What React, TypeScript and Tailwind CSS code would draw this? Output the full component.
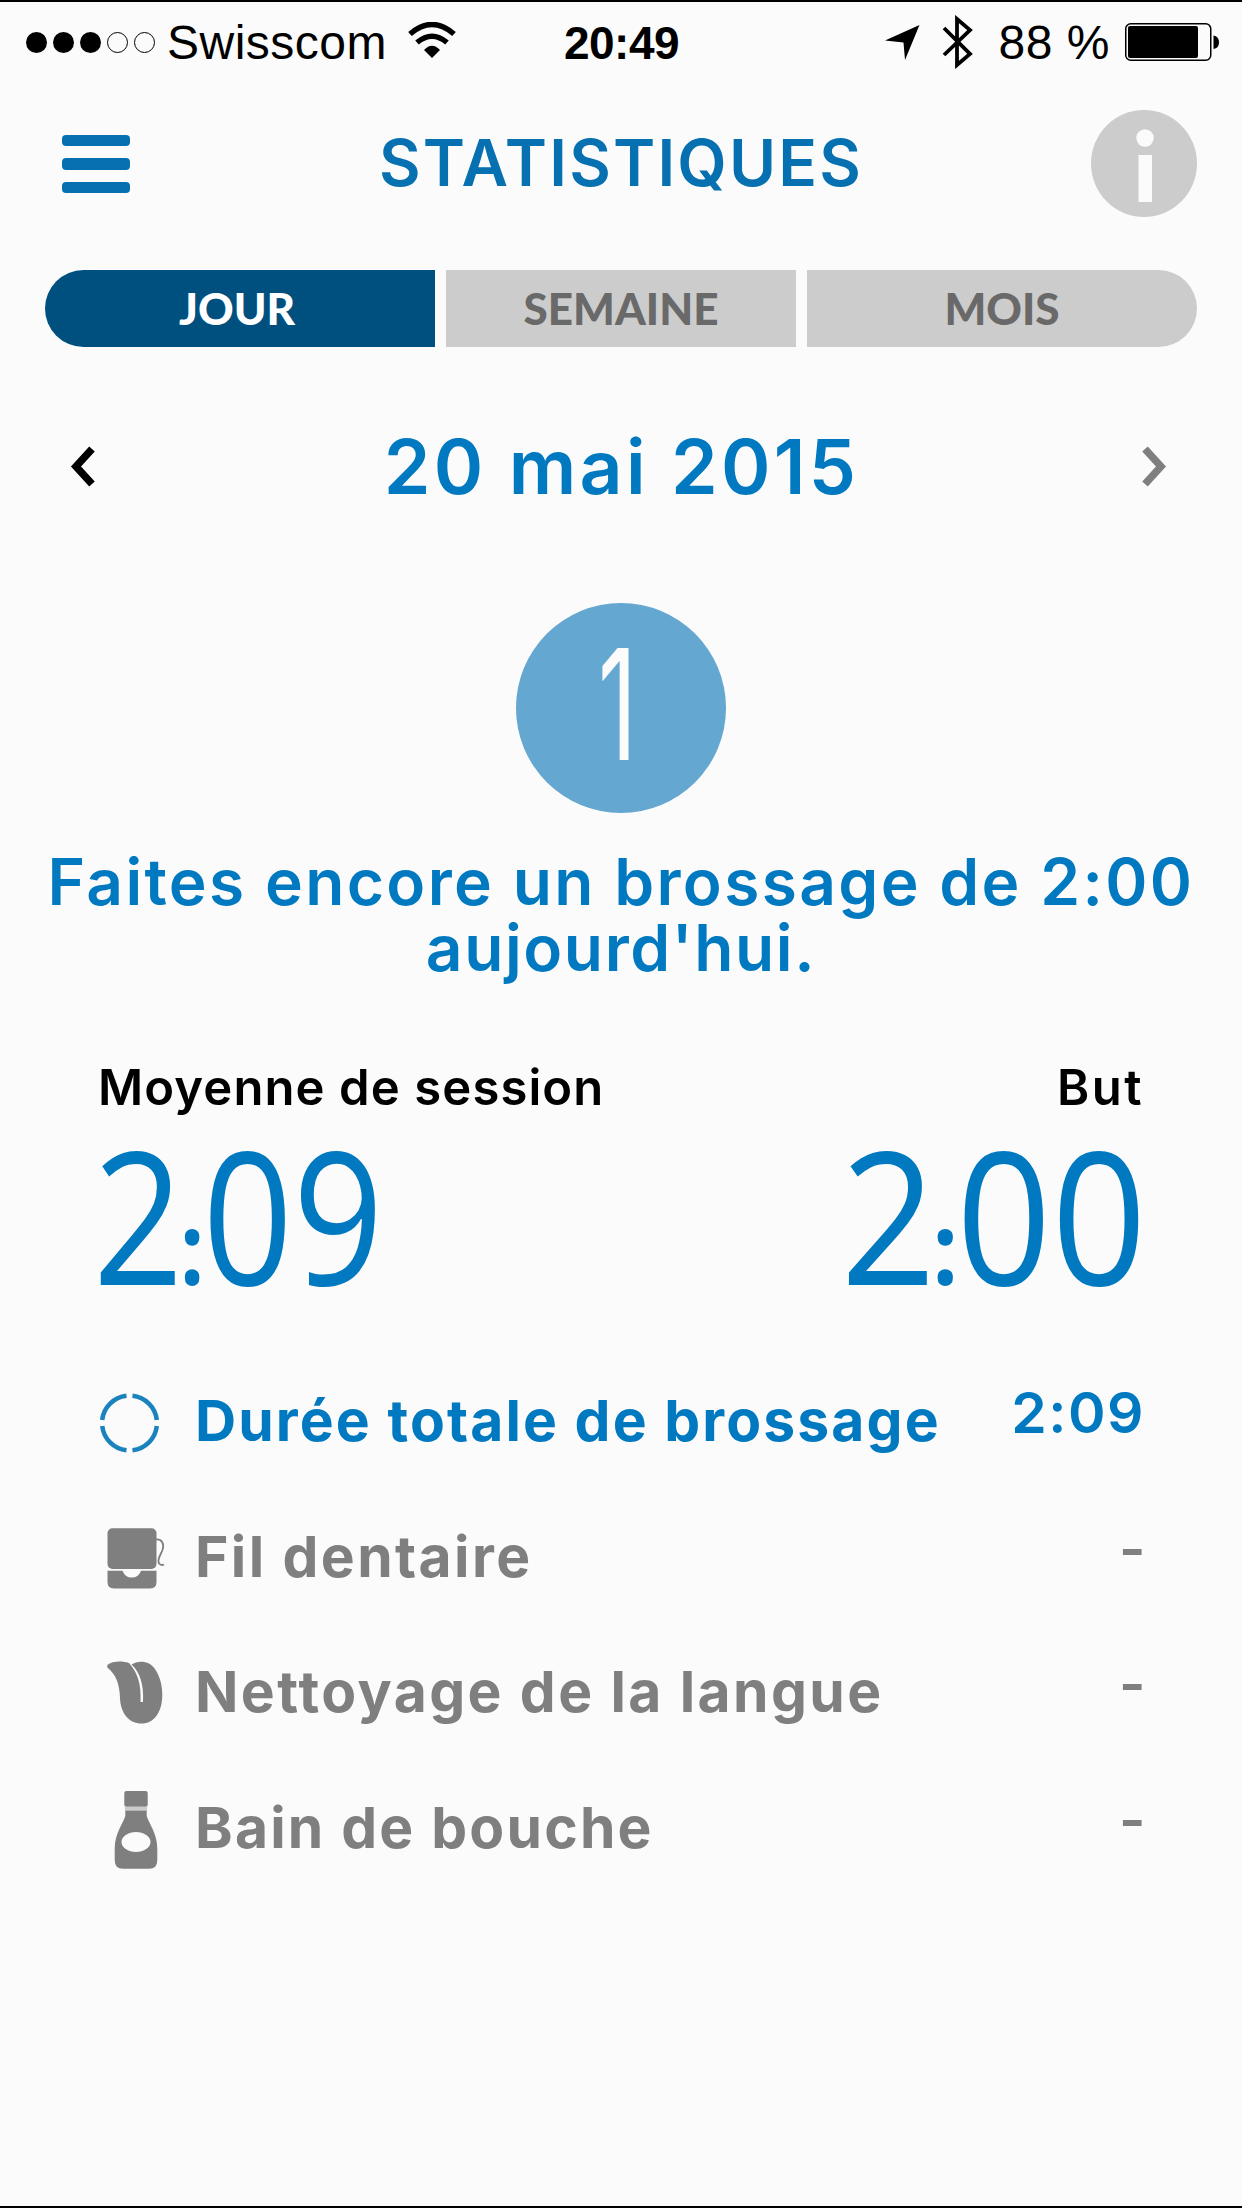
import type { ReactNode } from 'react';

const GREY = '#7f7f7f';

function StatusBar() {
  return (
    <div className="grid h-20 grid-cols-[1fr_auto_1fr] items-center pl-[26px] pr-[22px] font-['Liberation_Sans',sans-serif] text-5xl text-black">
      <div className="flex items-center">
        <div className="flex gap-[6px]">
          {[true, true, true, false, false].map((filled, i) => (
            <span
              key={i}
              className={filled ? 'size-[21px] rounded-full bg-black' : 'size-[21px] rounded-full border border-black'}
            />
          ))}
        </div>
        <span className="ml-[12px] pt-px tracking-[0.5px]">Swisscom</span>
        <svg className="-mt-[4px] ml-[21px]" width="48" height="36" viewBox="0 0 48 36">
          <path d="M2 12 Q24 -7 46 12" fill="none" stroke="#000" strokeWidth="5.500" />
          <path d="M9 20.5 Q24 8 39 20.5" fill="none" stroke="#000" strokeWidth="5.500" />
          <path d="M16 28 Q24 19.5 32 28 L24 36 Z" fill="#000" />
        </svg>
      </div>
      <span className="mr-[3px] pt-px text-[46px] font-bold tracking-[-0.5px]">20:49</span>
      <div className="flex items-center justify-end">
        <svg width="35" height="35" viewBox="0 0 35 35">
          <path d="M34.500 0 L20 35 L18.500 17.500 L0 15.500 Z" fill="#000" />
        </svg>
        <svg className="ml-[22px]" width="32" height="54" viewBox="0 0 32 54">
          <path d="M2 13 L28 39 L15 50 V4 L28 15 L2 40" fill="none" stroke="#000" strokeWidth="3.8" />
        </svg>
        <span className="ml-[25px] pt-px tracking-[0.5px]">88 %</span>
        <svg className="ml-[15px]" width="95" height="38" viewBox="0 0 95 38">
          <rect x="0.750" y="0.750" width="85" height="36.500" rx="5" fill="none" stroke="#000" strokeWidth="1.500" />
          <rect x="3" y="3" width="70" height="32" rx="2" fill="#000" />
          <path d="M88.500 12.500 Q94 13.500 94 19.500 Q94 25 88.500 26 Z" fill="#000" />
        </svg>
      </div>
    </div>
  );
}

function Header() {
  return (
    <header className="flex h-[163px] items-center justify-between pl-[62px] pr-[45px]">
      <div className="flex w-[106px] flex-col gap-[12px]">
        <span className="h-[11px] w-[68px] rounded bg-[#0670b1]" />
        <span className="h-[12px] w-[68px] rounded bg-[#0670b1]" />
        <span className="h-[11px] w-[68px] rounded bg-[#0670b1]" />
      </div>
      <h1 className="mr-[17px] pb-px text-[64px] leading-none font-semibold tracking-[2.2px] text-[#0670b1]">
        STATISTIQUES
      </h1>
      <svg width="106" height="107" viewBox="0 0 106 107">
        <ellipse cx="53" cy="53.500" rx="53" ry="53.500" fill="#ccc" />
        <circle cx="54" cy="28" r="8.700" fill="#fbfbfc" />
        <rect x="47.500" y="45" width="13.500" height="47" fill="#fbfbfc" />
      </svg>
    </header>
  );
}

function Tabs() {
  return (
    <nav className="mx-[45px] mt-[25px] grid h-[77px] grid-cols-[390px_350px_390px] gap-[11px] font-['Lato',sans-serif] text-[44px] leading-[76px] font-black">
      <span className="rounded-l-full bg-[#00507f] pr-[6px] text-center text-white">JOUR</span>
      <span className="bg-[#ccc] text-center text-[#696969]">SEMAINE</span>
      <span className="rounded-r-full bg-[#ccc] text-center text-[#696969]">MOIS</span>
    </nav>
  );
}

function DateRow() {
  return (
    <div className="flex h-[238px] items-center justify-between pr-[76px] pl-[70px]">
      <svg width="25" height="44" viewBox="0 0 25 44">
        <path d="M22 5 L6 22.500 L22 40" fill="none" stroke="#000" strokeWidth="7.500" />
      </svg>
      <h2 className="pl-[7px] text-[75px] leading-none font-semibold tracking-[3.3px]">20 mai 2015</h2>
      <svg width="25" height="44" viewBox="0 0 25 44">
        <path d="M4 5 L20 22.500 L4 40" fill="none" stroke={GREY} strokeWidth="7.500" />
      </svg>
    </div>
  );
}

function TimerIcon() {
  return (
    <path
      d="M32.500 15.700 A27.500 27.500 0 0 1 56.800 40 M56.800 46 A27.500 27.500 0 0 1 32.500 70.300 M26.500 70.300 A27.500 27.500 0 0 1 2.200 46 M2.200 40 A27.500 27.500 0 0 1 26.500 15.700"
      fill="none"
      stroke="#1a82bd"
      strokeWidth="4.500"
    />
  );
}

function FlossIcon() {
  return (
    <>
      <rect x="7.500" y="12.300" width="49" height="40.700" rx="5" fill={GREY} />
      <path d="M7.500 54.700 H22.500 Q25 61.500 31.700 61.500 Q38.500 61.500 41 54.700 H56.500 V66 Q56.500 72.500 50 72.500 H14 Q7.500 72.500 7.500 66 Z" fill={GREY} />
      <path d="M56 23.500 C62 23 64.500 28 62.500 34 C60.500 39 58 42 58.500 46 C59 49 62 49.500 64 48.500" fill="none" stroke={GREY} strokeWidth="1.800" />
    </>
  );
}

function TongueIcon() {
  return (
    <path
      d="M7.300 14 C12 10 22 9.500 29 12 C37 21 41.500 32 40.500 51 H43 C44 34 40 21 31.500 13.500 C36 10.500 43 9.500 49 12.500 C57 17 62.300 30 62.300 44 C62.300 61 54 72.600 41.700 72.600 C29 72.600 20.500 62 20 47 C19.800 34 16 23 7.300 16.500 Z"
      fill={GREY}
    />
  );
}

function MouthwashIcon() {
  return (
    <>
      <rect x="24.300" y="4" width="23.400" height="15.800" rx="2" fill={GREY} />
      <rect x="24.800" y="19.800" width="22.400" height="3.500" fill="#ccc" />
      <path
        fillRule="evenodd"
        d="M25.300 23.500 H46.700 V29 C49 37 57.300 46 57.300 62 V73 Q57.300 81.700 49 81.700 H23 Q14.700 81.700 14.700 73 V62 C14.700 46 23 37 25.300 29 Z M21.500 55 A14.500 10 0 0 0 50.500 55 A14.500 10 0 0 0 21.500 55 Z"
        fill={GREY}
      />
    </>
  );
}

interface ActivityRowProps {
  icon: ReactNode;
  label: string;
  value: string;
  className: string;
}

function ActivityRow({ icon, label, value, className }: ActivityRowProps) {
  return (
    <li className={`flex h-[135.7px] items-center text-[57px] leading-none ${className}`}>
      <svg className="mr-[27px] shrink-0" width="68" height="88" viewBox="0 -4 68 88">
        {icon}
      </svg>
      <span className="pt-px font-bold whitespace-nowrap">{label}</span>
      <span className="ml-auto pb-[15px] font-semibold tracking-[1.5px]">{value}</span>
    </li>
  );
}

export default function App() {
  const activities = [
    { icon: <TimerIcon />, label: 'Durée totale de brossage', value: '2:09', className: 'pr-[97px] tracking-[2.1px] text-[#0079c1]' },
    { icon: <FlossIcon />, label: 'Fil dentaire', value: '-', className: 'pr-[95px] tracking-[2.4px] text-[#7f7f7f]' },
    { icon: <TongueIcon />, label: 'Nettoyage de la langue', value: '-', className: 'pr-[95px] tracking-[2.4px] text-[#7f7f7f]' },
    { icon: <MouthwashIcon />, label: 'Bain de bouche', value: '-', className: 'pr-[95px] tracking-[2.2px] text-[#7f7f7f]' },
  ];

  return (
    <main className="h-[2208px] w-[1242px] overflow-hidden border-y-2 border-black bg-[#fbfbfc] font-['Inter',sans-serif] text-[#0079c1]">
      <StatusBar />
      <Header />
      <Tabs />
      <DateRow />

      {/* Sessions left today */}
      <div className="mx-auto mt-[18px] flex size-[210px] items-center justify-center rounded-full bg-[#64a7d0]">
        <span className="mr-[7px] -mt-[8px] inline-block scale-x-[0.62] text-[154px] leading-none text-[#fbfbfc]">1</span>
      </div>
      <p className="mt-[36px] text-center text-[64px] leading-[66px] font-semibold tracking-[2.35px] whitespace-nowrap">
        Faites encore un brossage de 2:00
        <br />
        <span className="tracking-[1.6px]">aujourd'hui.</span>
      </p>

      {/* Average / goal */}
      <div className="mt-[77px] flex justify-between pr-[98px] pl-[98px] text-[49px] leading-[60px] font-semibold text-black">
        <span className="tracking-[1.1px]">Moyenne de session</span>
        <span className="tracking-[2.5px]">But</span>
      </div>
      <div className="mt-[20px] flex h-[150px] justify-between pr-[95px] pl-[93px] font-['Open_Sans',sans-serif] text-[186px] leading-[150px] font-normal">
        <span className="inline-block origin-left scale-x-[0.85]">
          2<span className="-mr-[2px] -ml-[4px] text-[100px] leading-none font-bold">:</span>09
        </span>
        <span className="inline-block origin-right scale-x-[0.895]">
          2<span className="-mr-[2px] -ml-[4px] text-[100px] leading-none font-bold">:</span>00
        </span>
      </div>

      <ul className="mt-[64px] pl-[100px]">
        {activities.map((activity) => (
          <ActivityRow key={activity.label} {...activity} />
        ))}
      </ul>
    </main>
  );
}
